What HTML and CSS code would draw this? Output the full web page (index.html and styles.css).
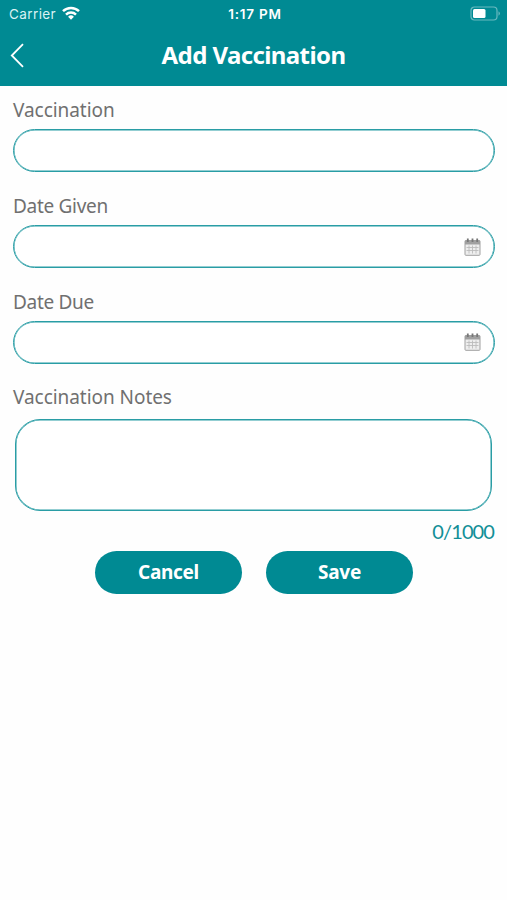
FILE: index.html
```html
<!DOCTYPE html>
<html lang="en">
<head>
    <meta charset="UTF-8">
    <meta name="viewport" content="width=device-width, initial-scale=1.0">
    <title>Add Vaccination</title>
    <link rel="stylesheet" href="styles.css">
</head>
<body>
    <header class="header">
        <div class="status-bar">
            <div class="carrier">
                <span>Carrier</span>
                <svg class="wifi" width="18" height="14" viewBox="0 0 18 14" fill="none" stroke="#fff" stroke-width="2.5">
                    <path d="M1 5.2a11.5 11.5 0 0 1 16 0"/>
                    <path d="M4 8.6a7.2 7.2 0 0 1 10 0"/>
                    <path d="M9 13.7 6.1 10.7a4.2 4.2 0 0 1 5.8 0z" fill="#fff" stroke="none"/>
                </svg>
            </div>
            <span class="time">1:17 PM</span>
            <svg class="battery" width="31" height="15" viewBox="0 0 31 15">
                <rect x="1" y="1" width="26" height="13" rx="3.5" fill="none" stroke="#69bac0" stroke-width="1.2"/>
                <rect x="3" y="3" width="12.5" height="9" rx="1.5" fill="#fff"/>
                <path d="M28.5 5.2a2.6 2.6 0 0 1 0 4.6z" fill="#69bac0"/>
            </svg>
        </div>
        <div class="nav-bar">
            <a class="back" href="#" aria-label="Back">
                <svg width="14" height="25" viewBox="0 0 14 25" fill="none" stroke="#fff" stroke-width="1.8">
                    <path d="M13 1.2 1.8 12.5 13 23.8"/>
                </svg>
            </a>
            <h1>Add Vaccination</h1>
        </div>
    </header>

    <form class="vaccination-form">
        <div class="form-group">
            <label for="vaccination">Vaccination</label>
            <div class="field"><input type="text" id="vaccination"></div>
        </div>

        <div class="form-group">
            <label class="date-label" for="given">Date Given</label>
            <div class="field">
                <input type="text" id="given">
                <svg class="calendar" width="17" height="18" viewBox="0 0 17 18">
                    <rect x="1" y="2.5" width="15" height="14.8" rx=".8" fill="#eee" stroke="#a0a0a0"/>
                    <path d="M1 2.5h15v4H1z" fill="#a0a0a0"/>
                    <path d="M3.8 .5v3.6M8.5 .5v3.6M13.2 .5v3.6" stroke="#777" stroke-width="1.8"/>
                    <path d="M2.5 9.5h12M2.5 12.5h12M5 7.5v8M8.5 7.5v8M12 7.5v8" stroke="#bbb" stroke-width=".9"/>
                </svg>
            </div>
        </div>

        <div class="form-group">
            <label class="date-label" for="due">Date Due</label>
            <div class="field">
                <input type="text" id="due">
                <svg class="calendar" width="17" height="18" viewBox="0 0 17 18">
                    <rect x="1" y="2.5" width="15" height="14.8" rx=".8" fill="#eee" stroke="#a0a0a0"/>
                    <path d="M1 2.5h15v4H1z" fill="#a0a0a0"/>
                    <path d="M3.8 .5v3.6M8.5 .5v3.6M13.2 .5v3.6" stroke="#777" stroke-width="1.8"/>
                    <path d="M2.5 9.5h12M2.5 12.5h12M5 7.5v8M8.5 7.5v8M12 7.5v8" stroke="#bbb" stroke-width=".9"/>
                </svg>
            </div>
        </div>

        <div class="form-group notes">
            <label for="notes">Vaccination Notes</label>
            <textarea id="notes" maxlength="1000"></textarea>
            <div class="counter">0/1000</div>
        </div>

        <div class="button-group">
            <button type="button" class="btn btn-cancel">Cancel</button>
            <button type="button" class="btn btn-save">Save</button>
        </div>
    </form>
</body>
</html>
```
FILE: styles.css
```css
* {
    margin: 0;
    padding: 0;
    box-sizing: border-box;
}

body {
    font-family: "Noto Sans", sans-serif;
    background: #fefefe;
}

.header {
    height: 86px;
    background: #008a93;
    color: white;
}

.status-bar {
    display: grid;
    grid-template-columns: 1fr auto 1fr;
    align-items: center;
    height: 27px;
    padding: 0 6px 0 9px;
    font-family: Inter, sans-serif;
    font-size: 13.5px;
}

.carrier {
    display: flex;
    align-items: center;
    gap: 6px;
    color: #d9f2f3;
    letter-spacing: 0.4px;
}

.wifi {
    margin-top: -2px;
}

.time {
    font-weight: 600;
    letter-spacing: 0.8px;
}

.battery {
    justify-self: end;
}

.nav-bar {
    display: grid;
    grid-template-columns: 40px 1fr 40px;
    align-items: center;
    height: 57px;
}

.back {
    display: flex;
    padding-left: 10px;
}

h1 {
    padding-bottom: 2px;
    font-size: 24px;
    font-weight: 700;
    line-height: 32px;
    text-align: center;
    white-space: nowrap;
    letter-spacing: -0.6px;
}

.vaccination-form {
    padding: 10px 12px 0 13px;
}

.form-group {
    margin-bottom: 19.4px;
}

label {
    display: block;
    height: 28px;
    margin-bottom: 5.4px;
    font-size: 19px;
    line-height: 28px;
    color: #707070;
    letter-spacing: -0.05px;
}

.date-label {
    letter-spacing: -0.3px;
}

.field {
    display: flex;
    align-items: center;
    height: 43px;
    padding: 0 13px 0 20px;
    border: 1px solid #299da5;
    border-radius: 22px;
    background: white;
    box-shadow: inset 0 0 0 0.5px #299da5;
}

.field input {
    flex: 1;
    min-width: 0;
    border: none;
    outline: none;
    background: none;
    font: inherit;
}

textarea {
    display: block;
    width: calc(100% - 5px);
    height: 92px;
    margin: 8px 3px 0 2px;
    padding: 14px 20px;
    border: 1px solid #299da5;
    border-radius: 25px;
    outline: none;
    resize: none;
    font: inherit;
    box-shadow: inset 0 0 0 0.5px #299da5;
}

.counter {
    margin-top: 7px;
    padding-right: 1px;
    font-family: Lato, sans-serif;
    font-size: 20px;
    line-height: 26px;
    text-align: right;
    color: #118f97;
    letter-spacing: -0.9px;
}

.form-group.notes {
    margin-bottom: 7px;
}

.button-group {
    display: flex;
    justify-content: center;
    gap: 24px;
}

.btn {
    width: 147px;
    height: 43px;
    border: none;
    border-radius: 22px;
    background: #008a93;
    color: white;
    font-family: inherit;
    font-size: 19px;
    font-weight: 700;
    line-height: 43px;
    letter-spacing: -0.3px;
}
```
